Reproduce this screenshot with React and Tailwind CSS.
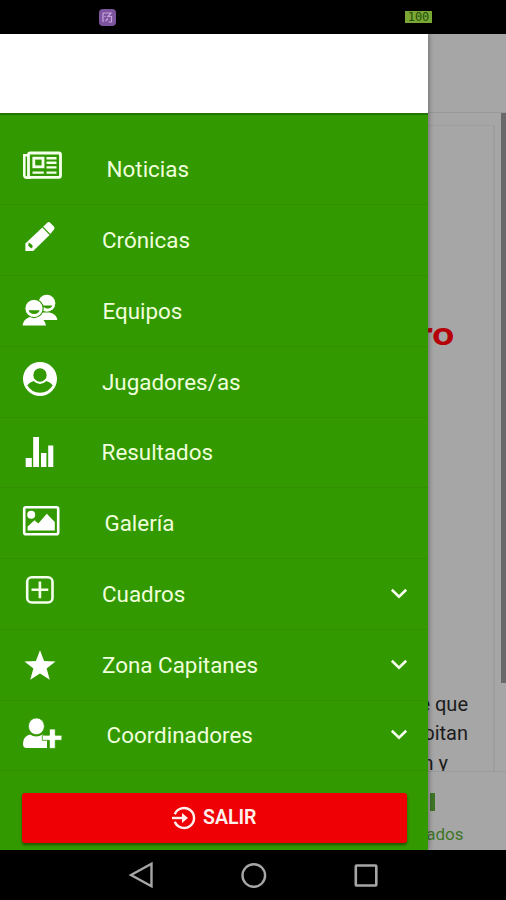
import React from "react";

const icons = {
  news: (
    <g fill="none" stroke="#f4ffec" strokeWidth="2.8">
      <rect x="28.5" y="19" width="32" height="24.4" rx="1.8" />
      <path d="M28 21.2H24.3V41.2Q24.3 43.6 27 43.6H31" strokeWidth="2.6" />
      <rect x="33.8" y="24.2" width="9.2" height="8.6" />
      <path d="M46.5 24.2H56.5M46.5 28.7H56.5M46.5 33.4H56.5M32.5 38.6H43.8M46.5 38.6H56.5" strokeWidth="2.4" />
    </g>
  ),
  pencil: (
    <g fill="#fff">
      <path d="M42.3 22.6L49.6 29.9L33.2 46H25.4V38.6Z" />
      <path d="M43.2 21.7L47.2 17.8Q48.8 16.4 50.4 17.9L53.9 21.5Q55.2 23 53.9 24.6L50.4 28.9Z" />
      <path d="M28.6 37.8Q32 38.6 32.8 41.8L31.4 43.4L28.2 40.7Z" fill="#339900" />
    </g>
  ),
  team: (
    <g fill="#fff">
      <path d="M34 43.9C35 39.8 38 37.7 42.5 36.5H49.5C54 37.7 56.8 39.9 57.3 43.9Z" />
      <circle cx="46.8" cy="27.3" r="8.5" />
      <path d="M40 29.4H52.4Q50.8 32.6 46.5 32.6Z" fill="#339900" />
      <path d="M22.6 49.4C23.2 45 26 42.2 30 41H38.4C42.6 42.2 45.3 45 46 49.4Z" />
      <circle cx="34" cy="32.4" r="9.2" stroke="#339900" strokeWidth="1.2" />
      <path d="M28.6 34.2H39.6Q38.4 38 34.1 38Q29.8 38 28.6 34.2Z" fill="#339900" />
    </g>
  ),
  player: (
    <g>
      <circle cx="40" cy="32" r="17" fill="#fff" />
      <path d="M27.3 38.2Q30 34.8 33.7 34Q36.5 37 40 37Q43.5 37 46.3 34Q50 34.8 52.7 38.2Q48.5 45.6 40 45.8Q31.5 45.6 27.3 38.2Z" fill="#339900" />
      <circle cx="40" cy="28" r="7.5" fill="#339900" stroke="#fff" strokeWidth="1.6" />
    </g>
  ),
  results: (
    <path fill="#fff" d="M25.7 41H31.8V50H25.7ZM33.2 20H39V50H33.2ZM41 36H46.4V50H41ZM48.2 28.5H53.3V50H48.2Z" />
  ),
  gallery: (
    <g fill="#fff">
      <rect x="24.2" y="19.2" width="34" height="27" rx="1.8" fill="none" stroke="#fff" strokeWidth="2.6" />
      <circle cx="31.2" cy="26.7" r="4" />
      <path d="M27.6 42.5V38.5L34.5 32.2L38.3 35.5L46.8 25.7L54.8 34V42.5Z" />
    </g>
  ),
  plus: (
    <g fill="none" stroke="#f4ffec">
      <rect x="27.2" y="18.2" width="25.3" height="25.3" rx="4.6" strokeWidth="2.6" />
      <path d="M31.5 30.8H48.3M39.9 22.4V39.2" strokeWidth="2.6" />
    </g>
  ),
  star: (
    <path fill="#fff" d="M40 20.2L44.1 30.9L55.5 31.4L46.6 38.5L49.8 49.8L40 43.4L30.2 49.8L33.4 38.5L24.5 31.4L35.9 30.9Z" />
  ),
  addUser: (
    <g fill="#fff">
      <path d="M23 43.7Q23 36.2 30 34.5Q33 36.5 36.2 36.5Q39.5 36.5 42.4 34.5Q45 34.9 47 36.7V48H26.5Q23 48 23 43.7Z" />
      <ellipse cx="36.4" cy="26.3" rx="8" ry="8.4" stroke="#339900" strokeWidth=".8" />
      <path d="M49.4 29H55.3V35.2H61.9V40.3H55.3V48.4H49.4V40.3H42.3V35.2H49.4Z" stroke="#339900" strokeWidth=".8" />
    </g>
  ),
};

const items = [
  { icon: "news", label: "Noticias", pad: "pl-[26.6px]" },
  { icon: "pencil", label: "Crónicas", pad: "pl-[22px]" },
  { icon: "team", label: "Equipos", pad: "pl-[22.5px]" },
  { icon: "player", label: "Jugadores/as", pad: "pl-[22px]" },
  { icon: "results", label: "Resultados", pad: "pl-[21.6px]" },
  { icon: "gallery", label: "Galería", pad: "pl-[24.4px]" },
  { icon: "plus", label: "Cuadros", pad: "pl-[22px]", more: true },
  { icon: "star", label: "Zona Capitanes", pad: "pl-[22px]", more: true },
  { icon: "addUser", label: "Coordinadores", pad: "pl-[26.6px]", more: true },
];

function MenuRow({ icon, label, pad, more }) {
  return (
    <li className="flex h-[70.75px] items-center border-b border-[#309000]">
      <svg className="h-[70px] w-[80px] shrink-0" viewBox="0 0 80 70">
        {icons[icon]}
      </svg>
      <span className={`${pad} flex-1 pt-[0.2px] text-[22.4px] leading-7 whitespace-nowrap text-[#efffdc]`}>{label}</span>
      {more && (
        <svg className="mr-5 h-[18px] w-[18px]" viewBox="0 0 18 18" fill="none" stroke="#f8fff0" strokeWidth="2.6">
          <path d="M1.8 4.8L9 11.6L16.2 4.8" />
        </svg>
      )}
    </li>
  );
}

function Page() {
  return (
    <div className="flex h-full flex-col bg-[#a6a6a6]">
      <div className="h-[79px] shrink-0 border-b border-[#999]" />
      <div className="flex h-[658px] shrink-0 justify-end">
        <div className="mt-3 mr-[6px] flex w-[480px] flex-col items-end border-t border-r-2 border-[#9e9e9e] pr-[25px]">
          <div className="mt-[186px] mr-[14px] h-10 origin-right scale-x-[1.15] font-['Lato',sans-serif] text-[33px] leading-10 font-black text-[#b50008]">ro</div>
          <div className="mt-[337.5px] text-right text-[20px] leading-[29.5px] text-[#1c1c1c]">
            <p>e que</p>
            <p>pitan</p>
            <p className="pr-5">n y</p>
          </div>
        </div>
        <div className="h-[570px] w-[5px] bg-[#696969]" />
      </div>
      <div className="relative flex flex-1 flex-col items-end border-t border-[#9b9b9b] bg-[#a6a6a6] pr-[42.5px]">
        <div className="mt-[21px] mr-[29px] h-[18px] w-[5px] bg-[#3d7526]" />
        <span className="mt-[11px] text-[17px] leading-6 text-[#3d7526]">Resultados</span>
      </div>
    </div>
  );
}

function Drawer() {
  return (
    <aside className="absolute inset-y-0 left-0 flex w-[428px] flex-col bg-[#339900] shadow-[1px_0_5px_rgba(0,0,0,0.35)]">
      <div className="h-[79px] shrink-0 bg-white" />
      <ul className="border-t-2 border-[#247500] pt-[19.5px]">
        {items.map((item) => (
          <MenuRow key={item.label} {...item} />
        ))}
      </ul>
      <button className="mt-[21.5px] ml-[21.5px] flex h-[50.5px] w-[385.5px] items-center justify-center gap-[7px] rounded-[3px] bg-[#ee0004] text-[19.5px] font-semibold text-[#fff0ee] shadow-[0_2px_3px_rgba(0,0,0,0.45)]">
        <svg className="-mt-px size-6" viewBox="0 0 24 24" fill="none" stroke="#fff0ee" strokeWidth="2.4">
          <path d="M2.8 8.2A10 10 0 1 1 2.8 15.8" />
          <path d="M0 12H12" />
          <path d="M10 7L16 12L10 17Z" fill="#fff0ee" stroke="none" />
        </svg>
        <span className="-mt-px">SALIR</span>
      </button>
    </aside>
  );
}

export default function App() {
  return (
    <div className="flex h-[900px] w-[506px] flex-col overflow-hidden bg-black font-['Roboto',sans-serif]">
      <header className="flex h-[34px] shrink-0 items-center pl-[99px]">
        <div className="flex size-[17px] items-center justify-center rounded-[4px] bg-[#7d559f]">
          <svg className="size-[11px]" viewBox="0 0 11 11" fill="none" stroke="#c9a5e0" strokeWidth="1.2">
            <path d="M1 10V2Q1 1 2 1H9L6 4.5H9.5V10H6.5M3 4V5M3.5 9L6 6.5" />
          </svg>
        </div>
        <div className="ml-[289px] flex h-3 w-[27px] items-center justify-center bg-[#7aa634] font-['DejaVu_Sans_Mono',monospace] text-[12px] leading-3 text-[#23500c]">100</div>
      </header>
      <main className="relative h-[816px] shrink-0 overflow-hidden">
        <Page />
        <Drawer />
      </main>
      <nav className="flex flex-1 items-center">
        <svg className="ml-[128px] size-7" viewBox="0 0 28 28" fill="none" stroke="#a6a6a6" strokeWidth="2.4">
          <path d="M3 14L23.5 2.8V25.2Z" />
        </svg>
        <svg className="ml-[84px] size-7" viewBox="0 0 28 28" fill="none" stroke="#a6a6a6" strokeWidth="2.4">
          <circle cx="13.8" cy="14.5" r="11.3" />
        </svg>
        <svg className="ml-[84px] size-7" viewBox="0 0 28 28" fill="none" stroke="#a6a6a6" strokeWidth="2.6">
          <rect x="3.8" y="4.5" width="20.5" height="20" rx=".8" />
        </svg>
      </nav>
    </div>
  );
}
